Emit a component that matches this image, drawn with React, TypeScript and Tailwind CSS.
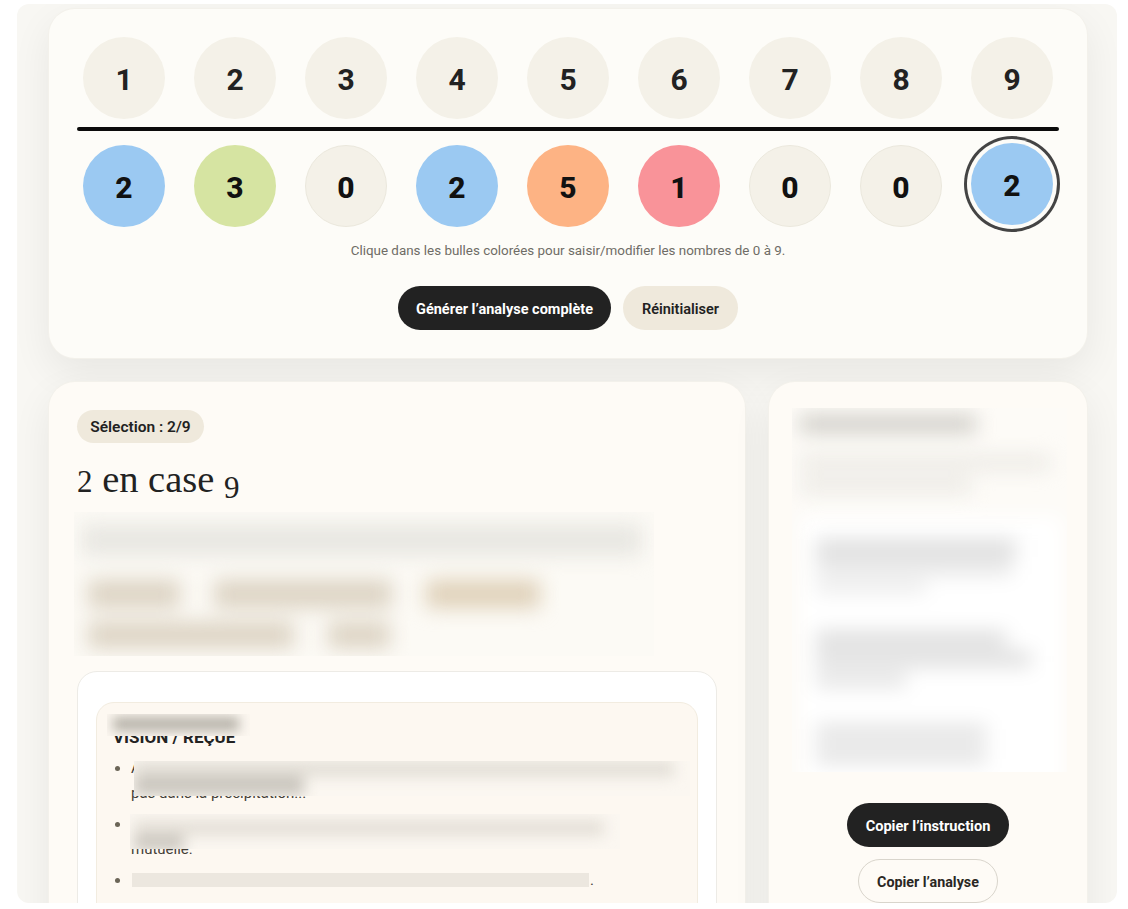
import React from 'react';

const SANS = { fontFamily: 'Roboto, "Noto Sans", sans-serif' };
const CARD_SHADOW = 'shadow-[0_0_0_1px_#f3f1eb,0_14px_40px_rgba(0,0,0,0.07)]';

const TOP = [1, 2, 3, 4, 5, 6, 7, 8, 9];

const BOTTOM = [
  { value: 2, color: 'bg-[#9bc9f2]' },
  { value: 3, color: 'bg-[#d6e4a2]' },
  { value: 0, color: 'bg-[#f4f1e8] border border-[#ebe8dd]' },
  { value: 2, color: 'bg-[#9bc9f2]' },
  { value: 5, color: 'bg-[#fdb384]' },
  { value: 1, color: 'bg-[#f99399]' },
  { value: 0, color: 'bg-[#f4f1e8] border border-[#ebe8dd]' },
  { value: 0, color: 'bg-[#f4f1e8] border border-[#ebe8dd]' },
];

const BubbleGrid = () => (
  <>
    <div className="grid grid-cols-9 gap-[17px]">
      {TOP.map((n) => (
        <div key={n} className="flex justify-center">
          <div className="flex h-[82px] w-[82px] items-center justify-center rounded-full bg-[#f4f1e8] pt-0.5 text-[30px] font-bold text-[#222222]">
            {n}
          </div>
        </div>
      ))}
    </div>
    <div className="mt-2 h-1 rounded-full bg-[#0b0b0b]" />
    <div className="mt-3.5 grid grid-cols-9 gap-[17px]">
      {BOTTOM.map((b, i) => (
        <div key={i} className="flex justify-center">
          <div className={`flex h-[82px] w-[82px] items-center justify-center rounded-full pt-0.5 text-[30px] font-extrabold text-[#111111] ${b.color}`}>
            {b.value}
          </div>
        </div>
      ))}
      <div className="flex justify-center">
        <div className="flex h-[82px] w-[82px] -translate-y-0.5 items-center justify-center rounded-full bg-[#9bc9f2] pt-0.5 text-[30px] font-extrabold text-[#111111] shadow-[0_0_0_4px_#fdfcf8,0_0_0_7px_#444444]">
          2
        </div>
      </div>
    </div>
  </>
);

// smudged zone over the intro text and its tags
const IntroSmudge = () => (
  <div className="-mx-[3px] mt-[11px] h-[144px] w-[580px] overflow-hidden bg-[#fcfaf5]">
    <div className="flex flex-col px-2 pt-3 blur-[10px]">
      <div className="h-[32px] w-[560px] bg-[#e8e7e2]" />
      <div className="mt-[24px] flex gap-[34px] pl-1.5">
        <div className="h-[28px] w-[92px] bg-[#dcd3c3]" />
        <div className="h-[28px] w-[178px] bg-[#dcd3c3]" />
        <div className="h-[28px] w-[114px] bg-[#dfd1b9]" />
      </div>
      <div className="mt-3.5 flex gap-[34px] pl-1.5">
        <div className="h-[26px] w-[206px] bg-[#dcd3c3]" />
        <div className="h-[26px] w-[62px] bg-[#dcd3c3]" />
      </div>
    </div>
  </div>
);

const AnalysisCard = () => (
  <section className={`h-[560px] w-[696px] shrink-0 rounded-t-[26px] bg-[#fefbf6] px-7 pt-7 ${CARD_SHADOW}`}>
    <span className="inline-flex h-[33px] w-[127px] items-center justify-center rounded-full bg-[#efe9dc] pt-[3px] text-[15.5px] font-semibold text-[#222222]">
      Sélection : 2/9
    </span>
    <h2 className="mt-[14px] flex h-[44px] items-baseline text-[38.5px] leading-[44px] text-[#222222]" style={{ fontFamily: '"Liberation Serif", serif' }}>
      <span className="text-[31px]">2</span>
      <span>&nbsp;en case&nbsp;</span>
      <span className="relative top-[6px] text-[31px]">9</span>
    </h2>

    <IntroSmudge />

    <div className="mt-[15px] h-[300px] rounded-[20px] border border-[#edebe6] bg-white px-[18px] pt-[30px]">
      <div className="relative h-[260px] rounded-[18px] border border-[#f2ece0] bg-[#fdf8f1] pl-[16px] pr-2 pt-[16px]">
        <h3 className="pt-1 text-[17px] font-bold leading-[28px] text-[#222222]">VISION / REÇUE</h3>
        <ul className="mt-[5px] list-disc pl-[18px] text-[15px] leading-[25px] text-[#444038] marker:text-[#6b6557]">
          <li className="h-[50px]">
            A
            <br />
            pas dans la précipitation...
          </li>
          <li className="mt-1.5 h-[50px]">
            <br />
            mutuelle.
          </li>
          <li className="mt-1.5 pr-[95px] text-right">.</li>
        </ul>

        <div className="absolute left-[10px] top-[11px] h-[22px] w-[143px] overflow-hidden bg-[#fcf7f0]">
          <div className="ml-[6px] mt-[3px] h-[14px] w-[126px] bg-[#b5b1a8] blur-[6px]" />
        </div>
        <div className="absolute left-[37px] top-[58px] h-[35px] w-[556px] overflow-hidden bg-[#fbf7f1]">
          <div className="flex flex-col blur-[7px]">
            <div className="h-[16px] w-[540px] bg-[#e3dfd7]" />
            <div className="h-[18px] w-[170px] bg-[#c9c5bd]" />
          </div>
        </div>
        <div className="absolute left-[33px] top-[111px] h-[35px] w-[490px] overflow-hidden bg-[#fbf7f1]">
          <div className="flex flex-col pl-1 pt-1.5 blur-[7px]">
            <div className="h-[16px] w-[470px] bg-[#e5e0d8]" />
            <div className="h-[14px] w-[50px] bg-[#c9c5bd]" />
          </div>
        </div>
        <div className="absolute left-[35px] top-[170px] h-[14px] w-[457px] bg-[#ece7df]" />
      </div>
    </div>
  </section>
);

// smudged zone over the instruction text and its white box
const InstructionSmudge = () => (
  <div className="ml-[23px] h-[364px] w-[275px] shrink-0 self-start overflow-hidden bg-[#fdfbf7]">
    <div className="flex flex-col blur-[10px]">
      <div className="ml-2 mt-2 h-[16px] w-[176px] bg-[#cbc9c3]" />
      <div className="ml-2 mt-6 h-[13px] w-[250px] bg-[#e9e7e2]" />
      <div className="ml-2 mt-2.5 h-[13px] w-[172px] bg-[#e9e7e2]" />
      <div className="ml-2 mt-6 flex h-[300px] w-[262px] flex-col bg-white px-4 pt-6">
        <div className="h-[18px] w-[200px] bg-[#dcdcdc]" />
        <div className="mt-1 h-[12px] w-[196px] bg-[#e2e2e2]" />
        <div className="mt-2 h-[10px] w-[110px] bg-[#e6e6e6]" />
        <div className="mt-10 h-[14px] w-[190px] bg-[#d8d8d8]" />
        <div className="mt-1.5 h-[14px] w-[215px] bg-[#dadada]" />
        <div className="mt-2 h-[12px] w-[90px] bg-[#dedede]" />
        <div className="mt-10 h-[14px] w-[170px] bg-[#dedede]" />
        <div className="mt-2 h-[14px] w-[170px] bg-[#dedede]" />
      </div>
    </div>
  </div>
);

const InstructionCard = () => (
  <aside className={`flex h-[560px] w-[318px] shrink-0 flex-col items-center rounded-t-[26px] bg-[#fefbf6] pt-[26px] ${CARD_SHADOW}`}>
    <InstructionSmudge />
    <button className="mt-[31px] h-11 w-[162px] shrink-0 rounded-full bg-[#222222] pt-[3px] text-[14.6px] font-bold text-white">
      Copier l’instruction
    </button>
    <button className="mt-3 h-11 w-[140px] shrink-0 rounded-full border border-[#d9d5cc] bg-[#fefbf6] pt-[3px] text-[14.3px] font-bold text-[#2a2723]">
      Copier l’analyse
    </button>
  </aside>
);

const App = () => {
  return (
    <div className="h-[909px] overflow-hidden bg-white" style={SANS}>
      <div className="mx-[17px] mt-1 h-[899px] w-[1100px] overflow-hidden rounded-xl bg-[#f8f7f3] px-8 pt-[5px]">
        <section className={`h-[349px] w-[1038px] rounded-[26px] bg-[#fdfcf8] px-7 pt-7 ${CARD_SHADOW}`}>
          <BubbleGrid />
          <p className="mt-[15px] text-center text-[13.4px] leading-[18px] text-[#6f6c66]">
            Clique dans les bulles colorées pour saisir/modifier les nombres de 0 à 9.
          </p>
          <div className="mt-[26px] flex justify-center gap-3">
            <button className="h-11 w-[213px] rounded-full bg-[#222222] pt-[3px] text-[14.5px] font-bold text-white">
              Générer l’analyse complète
            </button>
            <button className="h-11 w-[115px] rounded-full bg-[#efe9dc] pt-[3px] text-[14.5px] font-semibold text-[#222222]">
              Réinitialiser
            </button>
          </div>
        </section>
        <div className="mt-6 flex gap-6">
          <AnalysisCard />
          <InstructionCard />
        </div>
      </div>
    </div>
  );
};

export default App;
